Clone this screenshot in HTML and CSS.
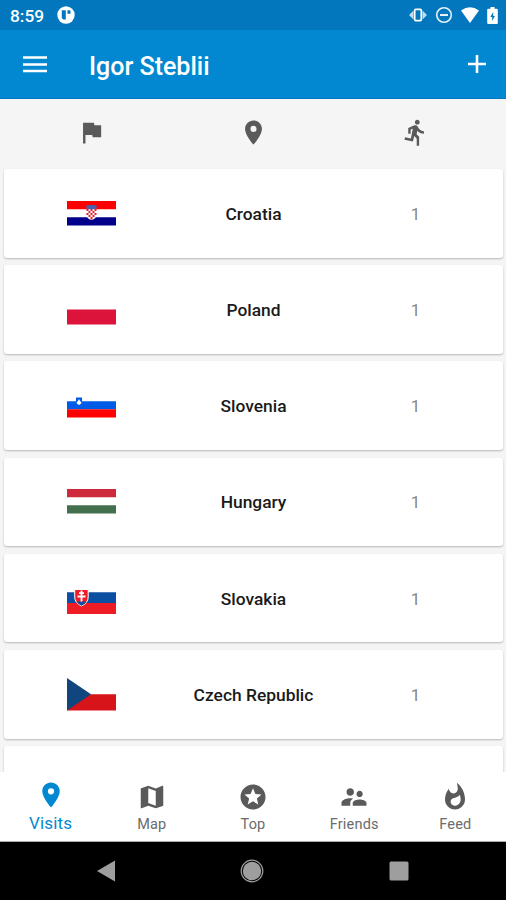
FILE: index.html
```html
<!DOCTYPE html>
<html lang="en">
<head>
  <meta charset="UTF-8">
  <title>Visits</title>
  <link rel="stylesheet" href="styles.css">
</head>
<body>
  <div class="status">
    <span class="time">8:59</span>
    <svg class="app-icon" width="18" height="18" viewBox="0 0 18 18"><circle cx="9" cy="9" r="8.7" fill="#fff"/><path d="M4.8 4.2h4v9.2h-2.2a1.8 1.8 0 0 1-1.8-1.8z" fill="#0277bd"/><path d="M10.5 4.2h1.6a1.4 1.4 0 0 1 1.4 1.4v2.2h-3z" fill="#0277bd"/></svg>
    <div class="status-icons">
      <svg width="18" height="14" viewBox="0 0 18 14"><path d="M0 7l4.500-4.500v9zM18 7l-4.500-4.500v9z" fill="#c0ddef"/><rect x="5.700" y="1.400" width="6.600" height="11.200" rx="1" fill="none" stroke="#fff" stroke-width="1.700"/></svg>
      <svg width="18" height="18" viewBox="0 0 18 18"><circle cx="9" cy="9" r="7.300" fill="none" stroke="#e6f2f9" stroke-width="1.600"/><path d="M5 9h8" stroke="#fff" stroke-width="1.800"/></svg>
      <svg width="18" height="16" viewBox="0 0 18 16"><path d="M0 3.500Q9-3 18 3.500L9 16z" fill="#fff"/></svg>
      <svg width="11" height="17" viewBox="0 0 11 17"><path d="M3.500 0h4v1.800h2.300q1 0 1 1V16q0 1-1 1H1.200q-1 0-1-1V2.800q0-1 1-1h2.300z" fill="#fff"/><path d="M6.200 5L3.300 10h1.900v4l2.700-5H6.200z" fill="#0277bd"/></svg>
    </div>
  </div>

  <div class="appbar">
    <svg width="24" height="18" viewBox="0 0 24 18"><path d="M0 2.500h24M0 9.500h24M0 16h24" stroke="#fff" stroke-width="2.300"/></svg>
    <h1>Igor Steblii</h1>
    <svg class="add" width="18" height="18" viewBox="0 0 18 18"><path d="M0 9h18M9 0v18" stroke="#fff" stroke-width="2.600"/></svg>
  </div>

  <div class="content">
    <div class="row head">
      <svg class="icon" viewBox="0 0 24 24"><path d="M14.400 6L14 4H5v17h2v-7h5.600l.4 2h7V6z"/></svg>
      <svg class="icon" viewBox="0 0 24 24"><path d="M12 2C8.130 2 5 5.130 5 9c0 5.250 7 13 7 13s7-7.750 7-13c0-3.870-3.130-7-7-7zm0 9.500a2.500 2.500 0 0 1 0-5 2.500 2.500 0 0 1 0 5z"/></svg>
      <svg class="icon" viewBox="0 0 24 24"><path d="M13.490 5.480c1.100 0 2-.9 2-2s-.9-2-2-2-2 .9-2 2 .9 2 2 2zm-3.600 13.900l1-4.400 2.100 2v6h2v-7.500l-2.100-2 .6-3c1.300 1.500 3.300 2.500 5.500 2.500v-2c-1.900 0-3.500-1-4.300-2.400l-1-1.600c-.4-.6-1-1-1.700-1-.3 0-.5.1-.8.1l-5.200 2.200v4.700h2v-3.400l1.800-.7-1.600 8.100-4.900-1-.4 2 7 1.400z"/></svg>
    </div>

    <div class="card row">
      <svg class="flag" viewBox="0 0 49 33"><path fill="#f00" d="M0 4h49v8.300H0z"/><path fill="#00008b" d="M0 20.300h49v8.300H0z"/><path fill="#fff" d="M19.500 12h10v5q0 5-5 6-5-1-5-6z"/><path fill="#e8202c" d="M19.500 12h2v2h-2zM23.500 12h2v2h-2zM27.500 12h2v2h-2zM21.500 14h2v2h-2zM25.500 14h2v2h-2zM19.500 16h2v2h-2zM23.500 16h2v2h-2zM27.500 16h2v2h-2zM21.500 18h2v2h-2zM25.500 18h2v2h-2zM23.500 20h2v2.500h-2z"/><path fill="#4b5fae" d="M19 9l2-1 1.500.5L24.500 7.500l2 1L28 8l2 1-1 3.200h-9z"/></svg>
      <span class="name">Croatia</span>
      <span class="count">1</span>
    </div>
    <div class="card row">
      <svg class="flag" viewBox="0 0 49 33"><path fill="#dc143c" d="M0 16.500h49v15H0z"/></svg>
      <span class="name">Poland</span>
      <span class="count">1</span>
    </div>
    <div class="card row">
      <svg class="flag" viewBox="0 0 49 33"><path fill="#005ce6" d="M0 12.200h49v8H0z"/><path fill="#f00" d="M0 20.200h49v8.200H0z"/><path fill="#005ce6" d="M9 8.500h6v4q0 2.500-3 3.500-3-1-3-3.500z"/><path fill="#fff" d="M9.800 13l1.200-1 1-2 1 2 1.300 1v1.500L12 16l-2.200-1.500z"/></svg>
      <span class="name">Slovenia</span>
      <span class="count">1</span>
    </div>
    <div class="card row">
      <svg class="flag" viewBox="0 0 49 33"><path fill="#cd2a3e" d="M0 4h49v8.300H0z"/><path fill="#436f4d" d="M0 20.300h49v8.300H0z"/></svg>
      <span class="name">Hungary</span>
      <span class="count">1</span>
    </div>
    <div class="card row">
      <svg class="flag" viewBox="0 0 49 33"><path fill="#0b4ea2" d="M0 10.300h49v10.800H0z"/><path fill="#ee1c25" d="M0 21h49v11H0z"/><path fill="#ee1c25" stroke="#fff" stroke-width="1" d="M7.700 7.500h13.500v7.500q0 6-6.700 9-6.800-3-6.800-9z"/><path fill="#0b4ea2" d="M10 20.200q2-1.500 4.500-.8 2.500-.7 4.500.8-2 2.300-4.500 3.500-2.500-1.200-4.500-3.500z"/><path stroke="#fff" stroke-width="1.800" fill="none" d="M14.500 8.500v11M12 11.200h5M10.500 14.500h8"/></svg>
      <span class="name">Slovakia</span>
      <span class="count">1</span>
    </div>
    <div class="card row">
      <svg class="flag" viewBox="0 0 49 33"><path fill="#d7141a" d="M0 16.200h49v16.300H0z"/><path fill="#11457e" d="M0 0l24 16.200L0 32.500z"/></svg>
      <span class="name">Czech Republic</span>
      <span class="count">1</span>
    </div>
    <div class="card row"></div>
  </div>

  <div class="tabs">
    <div class="tab active">
      <svg class="icon" viewBox="0 0 24 24"><path d="M12 2C8.130 2 5 5.130 5 9c0 5.250 7 13 7 13s7-7.750 7-13c0-3.870-3.130-7-7-7zm0 9.500a2.500 2.500 0 0 1 0-5 2.500 2.500 0 0 1 0 5z"/></svg>
      <span>Visits</span>
    </div>
    <div class="tab">
      <svg class="icon" viewBox="0 0 24 24"><path d="M20.500 3l-.16.030L15 5.100 9 3 3.360 4.900c-.21.070-.36.250-.36.480V20.500c0 .28.220.5.500.5l.16-.030L9 18.900l6 2.100 5.640-1.900c.21-.070.36-.25.360-.48V3.500c0-.28-.22-.5-.5-.5zM15 19l-6-2.110V5l6 2.110V19z"/></svg>
      <span>Map</span>
    </div>
    <div class="tab">
      <svg class="icon" viewBox="0 0 24 24"><path d="M11.990 2C6.470 2 2 6.480 2 12s4.470 10 9.990 10C17.520 22 22 17.520 22 12S17.520 2 11.990 2zm4.240 16L12 15.450 7.770 18l1.120-4.810-3.730-3.230 4.920-.42L12 5l1.920 4.530 4.920.42-3.730 3.230L16.230 18z"/></svg>
      <span>Top</span>
    </div>
    <div class="tab">
      <svg class="icon" viewBox="0 0 24 24"><path d="M16.500 12c1.380 0 2.490-1.120 2.490-2.500S17.880 7 16.500 7 14 8.120 14 9.500s1.120 2.500 2.500 2.500zM9 11c1.660 0 2.990-1.340 2.990-3S10.660 5 9 5 6 6.340 6 8s1.340 3 3 3zm7.500 3c-1.830 0-5.500.92-5.500 2.750V19h11v-2.250c0-1.830-3.670-2.750-5.500-2.750zM9 13c-2.330 0-7 1.170-7 3.500V19h7v-2.250c0-.85.33-2.340 2.370-3.470C10.500 13.100 9.660 13 9 13z"/></svg>
      <span>Friends</span>
    </div>
    <div class="tab">
      <svg class="icon" viewBox="0 0 24 24"><path d="M13.500.67s.74 2.650.74 4.800c0 2.060-1.350 3.730-3.410 3.730-2.070 0-3.630-1.670-3.630-3.730l.030-.36C5.210 7.510 4 10.620 4 14c0 4.420 3.580 8 8 8s8-3.580 8-8C20 8.610 17.410 3.800 13.500.67zM11.710 19c-1.780 0-3.220-1.400-3.220-3.140 0-1.620 1.050-2.760 2.810-3.120 1.770-.36 3.600-1.210 4.620-2.580.39 1.290.59 2.650.59 4.040 0 2.650-2.150 4.800-4.800 4.800z"/></svg>
      <span>Feed</span>
    </div>
  </div>

  <div class="navbar">
    <svg width="18" height="22" viewBox="0 0 18 22"><path d="M0 11L18 .5v21z" fill="#9e9e9e"/></svg>
    <svg width="24" height="24" viewBox="0 0 24 24"><circle cx="12" cy="12" r="9.200" fill="#9e9e9e"/><circle cx="12" cy="12" r="10.800" fill="none" stroke="#9e9e9e" stroke-width="1.200"/></svg>
    <svg width="20" height="20" viewBox="0 0 20 20"><rect x=".5" y=".5" width="19" height="19" rx="1.500" fill="#9e9e9e"/></svg>
  </div>
</body>
</html>
```
FILE: styles.css
```css
* {
  box-sizing: border-box;
}
body {
  margin: 0;
  height: 900px;
  display: flex;
  flex-direction: column;
  overflow: hidden;
  font-family: Roboto, sans-serif;
  background: #f5f5f5;
}
svg {
  display: block;
  flex: none;
}
.status {
  height: 30px;
  flex: none;
  display: flex;
  align-items: center;
  padding: 0 8px 0 10px;
  background: #0277bd;
  color: #fff;
}
.time {
  width: 47px;
  font-size: 17.3px;
  font-weight: 500;
  line-height: 30px;
  padding-top: 2px;
}
.status-icons {
  margin-left: auto;
  display: flex;
  align-items: center;
  gap: 8px;
}
.appbar {
  height: 69px;
  flex: none;
  display: flex;
  align-items: center;
  padding: 0 20px 0 23px;
  background: #0288d1;
  border-bottom: 1px solid #0277bd;
}
.appbar h1 {
  margin: 4px 0 0 42px;
  color: #fff;
  font-size: 25px;
  font-weight: 500;
}
.add {
  margin-left: auto;
}
.content {
  flex: 1;
  min-height: 0;
  overflow: hidden;
  padding: 0 3px 0 4px;
}
.row {
  display: grid;
  grid-template-columns: 162px 162px 162px;
  justify-content: center;
  align-items: center;
  justify-items: center;
}
.head {
  height: 70px;
  padding-bottom: 4px;
}
.icon {
  width: 29px;
  height: 29px;
  fill: #5a5a5a;
}
.card {
  height: 88.6px;
  margin-bottom: 7.6px;
  background: #fff;
  border-radius: 3px;
  box-shadow: 0 1px 2px rgba(0, 0, 0, 0.25);
}
.flag {
  width: 49px;
  height: 33px;
}
.name {
  color: #1a1a1a;
  font-size: 17.4px;
  font-weight: 500;
  padding-top: 1px;
}
.count {
  color: #888;
  font-size: 17px;
  padding-top: 1px;
}
.tabs {
  height: 70px;
  flex: none;
  display: grid;
  grid-template-columns: repeat(5, 1fr);
  background: #fff;
  border-bottom: 1px solid #aaa;
}
.tab {
  display: flex;
  flex-direction: column;
  align-items: center;
  padding-top: 10px;
  color: #6b6b6b;
  font-size: 14.5px;
  letter-spacing: 0.2px;
  line-height: 20px;
}
.tab .icon {
  width: 30px;
  height: 30px;
}
.tab span {
  margin-top: 3px;
}
.active {
  padding-top: 8px;
  color: #0288d1;
  font-size: 17px;
}
.active .icon {
  fill: #0288d1;
}
.active span {
  margin-top: 3px;
}
.navbar {
  height: 58px;
  flex: none;
  display: grid;
  grid-template-columns: 18px 1fr 20px;
  justify-items: center;
  align-items: center;
  padding: 0 97px;
  background: #000;
}
```
